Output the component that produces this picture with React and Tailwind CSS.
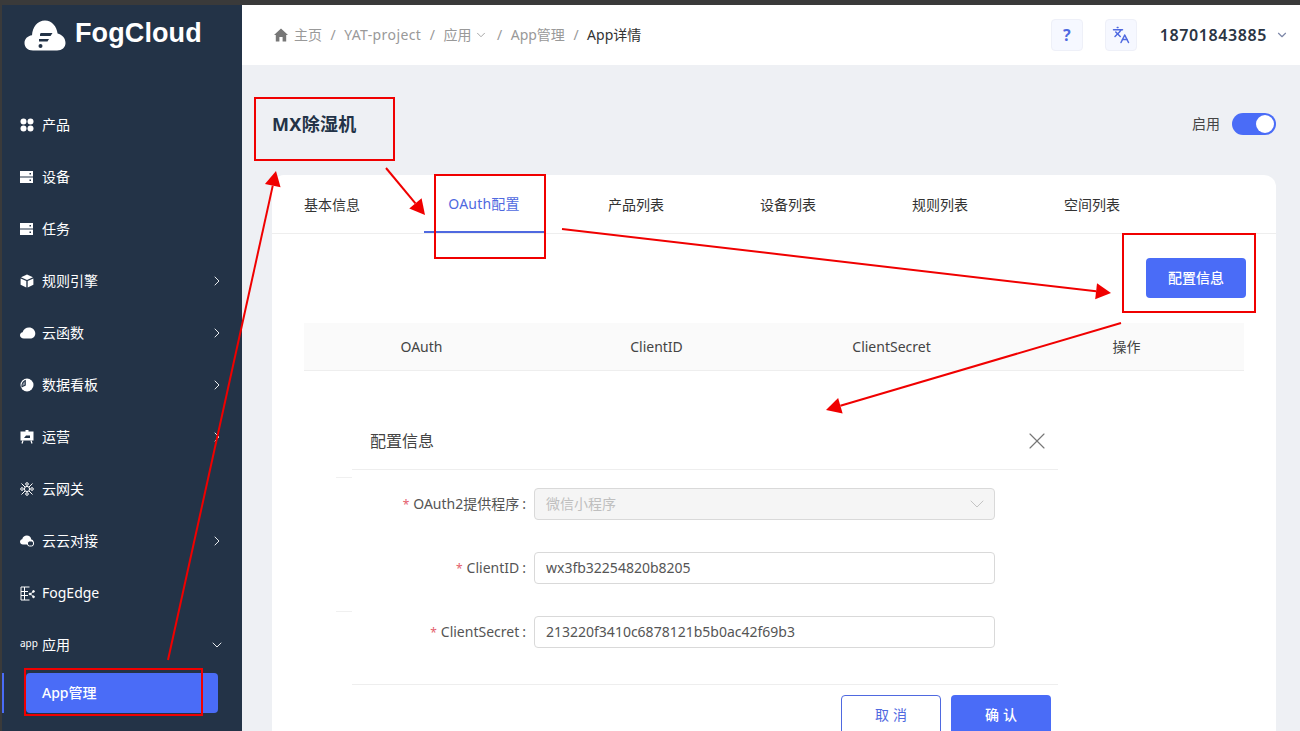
import React from 'react';
import { ChevronRight, ChevronDown, X, Languages } from 'lucide-react';

// sidebar icons, all on a 14px box
const GridIcon = () => (
  <svg width="14" height="14" viewBox="0 0 14 14" fill="#fff">
    <circle cx="3.5" cy="3.5" r="3" />
    <circle cx="10.5" cy="3.5" r="3" />
    <circle cx="3.5" cy="10.5" r="3" />
    <circle cx="10.5" cy="10.5" r="3" />
  </svg>
);

const ServerIcon = () => (
  <svg width="14" height="14" viewBox="0 0 14 14">
    <rect x="0" y="1" width="13" height="5.5" fill="#fff" />
    <rect x="0" y="7.5" width="13" height="5.5" fill="#fff" />
    <rect x="9.5" y="3" width="1.5" height="1.5" fill="#233347" />
    <rect x="9.5" y="9.5" width="1.5" height="1.5" fill="#233347" />
  </svg>
);

const BoxIcon = () => (
  <svg width="14" height="14" viewBox="0 0 14 14" fill="#fff">
    <path d="M7 0.5 L13 3.2 L7 6 L1 3.2 Z" />
    <path d="M0.6 4.4 L6.3 7 V13.5 L0.6 10.8 Z" />
    <path d="M13.4 4.4 L7.7 7 V13.5 L13.4 10.8 Z" />
  </svg>
);

const CloudIcon = () => (
  <svg width="16" height="14" viewBox="0 0 16 14" fill="#fff">
    <path d="M4 12.5 C1.5 12.5 0 11 0 9.2 C0 7.6 1.2 6.5 2.6 6.3 C3.4 3.4 6 1.5 9 1.5 C12.6 1.5 15.3 4.2 15.3 7.4 C15.3 10.4 13 12.5 10 12.5 Z" />
  </svg>
);

const PieIcon = () => (
  <svg width="14" height="14" viewBox="0 0 14 14">
    <circle cx="7" cy="7" r="6.5" fill="#fff" />
    <path d="M5.8 1.8 V7.4 L1.6 9.6 C0.8 6.4 2.6 2.8 5.8 1.8 Z" fill="#233347" />
    <path d="M4.8 3.4 V6.8 L2.4 8 C2.2 6.2 3.2 4.4 4.8 3.4 Z" fill="#8d97a3" />
  </svg>
);

const BoardIcon = () => (
  <svg width="14" height="14" viewBox="0 0 14 14">
    <rect x="0.5" y="1.5" width="13" height="9" fill="#fff" />
    <rect x="5.5" y="0" width="3" height="2" fill="#fff" />
    <path d="M3 10.5 L2 13.5 M11 10.5 L12 13.5" stroke="#fff" strokeWidth="1.2" />
    <path d="M4 8 L6 5.5 L10 5.5 L10 8 Z" fill="#233347" />
  </svg>
);

const GatewayIcon = () => (
  <svg width="14" height="14" viewBox="0 0 14 14" fill="none" stroke="#fff" strokeWidth="1">
    <path d="M1.5 1.5 L12.5 12.5 M12.5 1.5 L1.5 12.5" />
    <circle cx="7" cy="7" r="2.6" fill="#233347" />
    <circle cx="2" cy="7" r="1.3" />
    <circle cx="12" cy="7" r="1.3" />
    <circle cx="7" cy="2" r="1.3" />
    <circle cx="7" cy="12" r="1.3" />
  </svg>
);

const CloudLinkIcon = () => (
  <svg width="15" height="14" viewBox="0 0 15 14">
    <path d="M3 10.5 C1.2 10.5 0 9.4 0 7.8 C0 6.4 1 5.4 2.2 5.2 C2.8 3 4.6 1.6 6.8 1.6 C9.2 1.6 11 3.2 11.3 5.4 C12.6 5.6 13.6 6.6 13.6 8 C13.6 9.4 12.4 10.5 11 10.5 Z" fill="#fff" />
    <rect x="7.5" y="7" width="6" height="5" rx="2" fill="#233347" stroke="#fff" strokeWidth="1" />
  </svg>
);

const EdgeIcon = () => (
  <svg width="15" height="15" viewBox="0 0 15 15" fill="none" stroke="#fff" strokeWidth="1">
    <path d="M9.5 1 H1 V14 H9.5 M1 5.5 H8 M1 9.5 H8 M4.5 1 V14" />
    <path d="M10.5 8 L13.3 5.6 M10.5 8 L13.3 10.6" />
    <circle cx="10" cy="8" r="0.9" fill="#fff" />
    <circle cx="13.5" cy="5.4" r="0.9" fill="#fff" />
    <circle cx="13.5" cy="10.8" r="0.9" fill="#fff" />
  </svg>
);

const AppIcon = () => <span className="-mt-[4px] block text-[10px] leading-[14px] text-white">app</span>;

const menuItems = [
  { label: '产品', icon: <GridIcon /> },
  { label: '设备', icon: <ServerIcon /> },
  { label: '任务', icon: <ServerIcon /> },
  { label: '规则引擎', icon: <BoxIcon />, arrow: true },
  { label: '云函数', icon: <CloudIcon />, arrow: true },
  { label: '数据看板', icon: <PieIcon />, arrow: true },
  { label: '运营', icon: <BoardIcon />, arrow: true },
  { label: '云网关', icon: <GatewayIcon /> },
  { label: '云云对接', icon: <CloudLinkIcon />, arrow: true },
  { label: 'FogEdge', icon: <EdgeIcon /> },
  { label: '应用', icon: <AppIcon />, open: true },
];

const tabs = [
  { label: '基本信息', className: 'px-6 mr-10 text-[#333]' },
  { label: 'OAuth配置', className: 'w-[120px] justify-center mr-10 text-[#4f69e0] border-b-2 border-[#4f69e0] tracking-[0.2px]' },
  { label: '产品列表', className: 'px-6 mr-12 text-[#333]' },
  { label: '设备列表', className: 'px-6 mr-12 text-[#333]' },
  { label: '规则列表', className: 'px-6 mr-12 text-[#333]' },
  { label: '空间列表', className: 'px-6 text-[#333]' },
];

const Sep = () => <span className="mx-[8.5px] text-[#999]">/</span>;

const Logo = () => (
  <div className="flex h-[94px] items-start pl-[22px] pt-[14px]">
    <svg width="42" height="32" viewBox="0 0 42 32">
      <path d="M9 31.5 C3.5 31.5 0.5 28 0.5 24 C0.5 20 3.5 16.8 8 16.2 C8.6 8 13.4 1.5 21 1.5 C28 1.5 32.6 7.5 33.6 14.5 C38 15.5 41.5 19 41.5 24 C41.5 28.5 38 31.5 33 31.5 Z" fill="#fff" />
      <path d="M16 15.5 C16 14.4 16.8 14 18 14 H28.5 L26.5 17 H16 Z" fill="#233347" />
      <path d="M15 20 H25 L23.5 22.6 H15 Z" fill="#233347" />
      <circle cx="16.5" cy="27" r="2" fill="#233347" />
    </svg>
    <span className="ml-[9px] mt-[-4px] font-['Liberation_Sans','Noto_Sans',sans-serif] text-[27px] font-bold leading-[36px] tracking-[0.1px] text-white">
      FogCloud
    </span>
  </div>
);

const Sidebar = () => (
  <aside className="h-full w-[240px] shrink-0 bg-[#233347]">
    <Logo />
    {menuItems.map((item) => (
      <div key={item.label} className="flex h-[52px] items-center pl-[18px] pr-[17px] text-sm text-white">
        <span className="flex w-[22px] shrink-0 items-center">{item.icon}</span>
        <span className="flex-1">{item.label}</span>
        {item.arrow && <ChevronRight size={16} color="#e8ebee" strokeWidth={1.5} />}
        {item.open && <ChevronDown size={16} color="#e8ebee" strokeWidth={1.5} />}
      </div>
    ))}
    <div className="mt-[2px] flex h-10">
      <div className="h-10 w-[2px] bg-[#4a6cf7]" />
      <div className="ml-[22px] flex h-10 w-[192px] items-center rounded-sm bg-[#4a6cf7] pl-4 text-sm font-medium text-white">
        App管理
      </div>
    </div>
  </aside>
);

const Header = () => (
  <header className="flex h-[60px] shrink-0 items-center bg-white pl-8 pr-[11px]">
    <svg width="14" height="14" viewBox="0 0 14 14" fill="#777" className="mr-[6px]">
      <path d="M7 0.5 L14 7 H12.2 V13.5 H8.6 V9 H5.4 V13.5 H1.8 V7 H0 Z" />
    </svg>
    <div className="flex items-center text-sm text-[#999]">
      <span>主页</span>
      <Sep />
      <span className="tracking-[0.4px]">YAT-project</span>
      <Sep />
      <span>应用</span>
      <ChevronDown size={14} strokeWidth={1.5} className="ml-[3px]" />
      <Sep />
      <span>App管理</span>
      <Sep />
      <span className="text-[#333]">App详情</span>
    </div>
    <div className="ml-auto flex items-center">
      <div className="flex h-8 w-8 items-center justify-center rounded border border-[#eef0f8] bg-[#f6f8ff] text-base font-bold text-[#4f69e0]">
        ?
      </div>
      <div className="ml-[22px] flex h-8 w-8 items-center justify-center rounded border border-[#eef0f8] bg-[#f6f8ff]">
        <Languages size={18} color="#4f69e0" />
      </div>
      <span className="ml-[23px] text-base font-semibold tracking-[0.6px] text-[#2b3544]">18701843885</span>
      <ChevronDown size={14} color="#7d87a8" className="ml-[8px]" />
    </div>
  </header>
);

const Field = ({ label, value, disabled }) => (
  <div className="flex h-8 items-center">
    <label className="w-[182px] shrink-0 pr-[8px] text-right text-sm text-[#555]">
      <span className="mr-1 text-xs text-[#e4606d]">*</span>
      {label}
      <span className="ml-[3px]">:</span>
    </label>
    <div
      className={
        disabled
          ? 'flex h-8 w-[461px] items-center justify-between rounded-sm border border-[#d9d9d9] bg-[#f5f5f5] pl-[11px] pr-[5px] text-sm text-[#bfbfbf]'
          : 'flex h-8 w-[461px] items-center rounded-sm border border-[#d9d9d9] bg-white pl-[11px] pr-3 text-sm text-[#555]'
      }
    >
      {value}
      {disabled && <ChevronDown size={24} color="#c4c4c4" strokeWidth={1} />}
    </div>
  </div>
);

const Dialog = () => (
  <div className="relative ml-20 mt-[41px] w-[706px]">
    <div className="flex h-[58px] items-center justify-between border-b border-[#eee] pl-[18px] pr-[7px]">
      <span className="text-base text-[#444]">配置信息</span>
      <X size={28} color="#777" strokeWidth={1} />
    </div>
    <div className="absolute -left-4 top-[65px] h-px w-4 bg-[#f0f0f0]" />
    <div className="absolute -left-4 top-[199px] h-px w-4 bg-[#f0f0f0]" />
    <div className="flex flex-col gap-8 pt-[18px]">
      <Field label="OAuth2提供程序" value="微信小程序" disabled />
      <Field label="ClientID" value="wx3fb32254820b8205" />
      <Field label="ClientSecret" value="213220f3410c6878121b5b0ac42f69b3" />
    </div>
    <div className="mt-9 flex justify-end gap-[10px] border-t border-[#eee] pr-[7px] pt-[10px]">
      <button className="h-10 w-[100px] rounded-sm border border-[#4f69e0] bg-white pl-1 text-sm tracking-[4px] text-[#4f69e0]">
        取消
      </button>
      <button className="h-10 w-[100px] rounded-sm bg-[#4a6cf7] pl-1 text-sm font-medium tracking-[4px] text-white">
        确认
      </button>
    </div>
  </div>
);

const Content = () => (
  <main className="flex-1 overflow-hidden bg-[#eef0f4] pl-[30px] pr-6">
    <div className="flex h-[110px] items-center justify-between pt-[8px]">
      <h1 className="text-lg font-bold tracking-[0.3px] text-[#233347]">MX除湿机</h1>
      <div className="flex items-center gap-3">
        <span className="text-sm text-[#444]">启用</span>
        <div className="flex h-[22px] w-11 items-center justify-end rounded-full bg-[#4a6cf7] pr-[2px]">
          <div className="h-[18px] w-[18px] rounded-full bg-white" />
        </div>
      </div>
    </div>
    <div className="h-[600px] rounded-t-xl bg-white">
      <div className="flex h-[59px] items-stretch border-b border-[#eee] pl-2 text-sm">
        {tabs.map((tab) => (
          <div key={tab.label} className={`flex items-center pt-[2px] ${tab.className}`}>
            {tab.label}
          </div>
        ))}
      </div>
      <div className="flex justify-end pr-[30px] pt-[24px]">
        <button className="h-10 w-[100px] rounded bg-[#4a6cf7] text-sm font-medium text-white">配置信息</button>
      </div>
      <div className="ml-8 mt-[25px] grid h-12 w-[940px] grid-cols-4 items-center border-b border-[#eee] bg-[#fafafa] text-center text-sm text-[#444]">
        <span>OAuth</span>
        <span>ClientID</span>
        <span>ClientSecret</span>
        <span>操作</span>
      </div>
      <Dialog />
    </div>
  </main>
);

// red arrow: a line and a triangle head ending at the tip
const Arrow = ({ x1, y1, x2, y2 }) => {
  const len = Math.hypot(x2 - x1, y2 - y1);
  const ux = (x2 - x1) / len;
  const uy = (y2 - y1) / len;
  const bx = x2 - ux * 15;
  const by = y2 - uy * 15;
  const head = `${x2},${y2} ${bx - uy * 8},${by + ux * 8} ${bx + uy * 8},${by - ux * 8}`;
  return (
    <g>
      <line x1={x1} y1={y1} x2={bx} y2={by} stroke="#f00000" strokeWidth="2" />
      <polygon points={head} fill="#f00000" />
    </g>
  );
};

const Annotations = () => (
  <svg width="1300" height="731" viewBox="0 0 1300 731" fill="none" className="pointer-events-none absolute left-0 top-0">
    <g stroke="#f00000" strokeWidth="2">
      <rect x="255" y="98" width="139" height="62" />
      <rect x="435" y="175" width="110" height="83" />
      <rect x="1123" y="234" width="132" height="78" />
      <rect x="25" y="669" width="177" height="46" />
    </g>
    <Arrow x1={168} y1={660} x2={276} y2={171} />
    <Arrow x1={386} y1={168} x2={425} y2={215} />
    <Arrow x1={562} y1={229} x2={1111} y2={293} />
    <Arrow x1={1121} y1={323} x2={826} y2={410} />
  </svg>
);

const App = () => {
  return (
    <div className="relative h-[731px] w-[1300px] overflow-hidden bg-[#3a3a3a] font-['Noto_Sans','Noto_Sans_CJK_SC',sans-serif]">
      <div className="h-[5px]" />
      <div className="flex h-[726px] pl-[2px]">
        <Sidebar />
        <div className="flex min-w-0 flex-1 flex-col">
          <Header />
          <Content />
        </div>
      </div>
      <Annotations />
    </div>
  );
};

export default App;
